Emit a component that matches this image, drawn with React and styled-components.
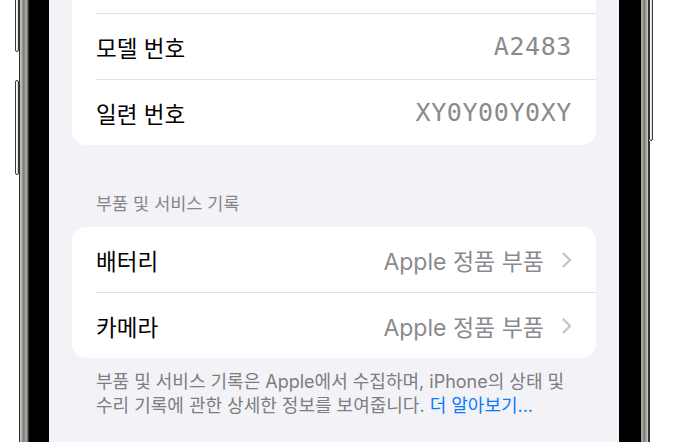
import React from 'react';
import styled, { createGlobalStyle } from 'styled-components';

const GlobalStyle = createGlobalStyle`
  html, body {
    margin: 0;
    padding: 0;
    background: #ffffff;
    overflow: hidden;
  }
`;

const Phone = styled.div`
  display: flex;
  width: 676px;
  height: 442px;
  background: #ffffff;
  font-family: 'Inter', 'Noto Sans CJK KR', sans-serif;
`;

const Edge = styled.div`
  display: flex;
  flex-direction: ${({ $side }) => ($side === 'right' ? 'row-reverse' : 'row')};
  padding-left: ${({ $side }) => ($side === 'right' ? '0' : '15px')};
  height: 100%;
`;

const ButtonColumn = styled.div`
  display: flex;
  flex-direction: column;
  width: 4px;
`;

const SideButton = styled.div`
  flex: none;
  height: ${({ $h }) => $h}px;
  margin-top: ${({ $top }) => $top}px;
  box-sizing: border-box;
  border: 1px solid #3a3a3a;
  border-radius: 2px;
  background: linear-gradient(90deg, #f4f4f4, #ffffff 50%, #b8b8b8);
`;

const EdgeLine = styled.div`
  flex: 1;
  border-left: 1px solid #3a3a3a;
`;

const Rail = styled.div`
  width: ${({ $w }) => $w}px;
  height: 100%;
  background: linear-gradient(
    ${({ $side }) => ($side === 'right' ? '270deg' : '90deg')},
    #303030 0px,
    #303030 1px,
    #c4c4be 1px,
    #b0b0aa 3px,
    #7c7c77 4px,
    #8e8e88 6px,
    #bdbdb7 7px,
    #5a5a56 9px,
    #1c1c1c 10px
  );
`;

const Bezel = styled.div`
  width: ${({ $w }) => $w}px;
  height: 100%;
  background: #000000;
`;

const Screen = styled.div`
  width: 570px;
  height: 100%;
  overflow: hidden;
  background: #f2f2f7;
  display: flex;
  flex-direction: column;
  padding: 0 23px;
  box-sizing: border-box;
`;

const Card = styled.div`
  background: #ffffff;
  border-radius: 14px;
  overflow: hidden;
  margin-top: ${({ $offset }) => $offset || 0}px;
`;

const Row = styled.div`
  padding-left: 24px;
`;

const RowInner = styled.div`
  display: flex;
  align-items: center;
  justify-content: space-between;
  height: 65px;
  padding-right: 24px;
  border-top: ${({ $first }) => ($first ? 'none' : '1px solid #e1e1e5')};
`;

const Label = styled.span`
  font-size: 22.5px;
  color: #000000;
`;

const Value = styled.span`
  display: flex;
  align-items: center;
  gap: 18px;
  font-size: ${({ $mono }) => ($mono ? '25px' : '23px')};
  font-family: ${({ $mono }) =>
    $mono
      ? "'DejaVu Sans Mono', 'Liberation Mono', monospace"
      : "'Inter', 'Noto Sans CJK KR', sans-serif"};
  letter-spacing: ${({ $mono }) => ($mono ? '0.6px' : '0')};
  color: #8a8a8e;
`;

const SectionHeader = styled.div`
  padding: 48px 24px 12px;
  font-size: 17.5px;
  line-height: 22px;
  color: #86868b;
`;

const Footer = styled.div`
  padding: 12px 24px 0;
  font-size: 18px;
  line-height: 24px;
  color: #7d7d82;
  white-space: nowrap;
`;

const Link = styled.span`
  color: #0a7aff;
`;

const Chevron = () => (
  <svg width="10" height="16" viewBox="0 0 10 16" fill="none">
    <path
      d="M1.5 1.5 L8 8 L1.5 14.5"
      stroke="#c4c4c7"
      strokeWidth="2.2"
      strokeLinecap="round"
      strokeLinejoin="round"
    />
  </svg>
);

const InfoRow = ({ label, value, mono, first, chevron }) => (
  <Row>
    <RowInner $first={first}>
      <Label>{label}</Label>
      <Value $mono={mono}>
        {value}
        {chevron && <Chevron />}
      </Value>
    </RowInner>
  </Row>
);

const App = () => {
  return (
    <>
      <GlobalStyle />
      <Phone>
        <Edge $side="left">
          <ButtonColumn>
            <SideButton $h={58} $top={-6} />
            <SideButton $h={95} $top={28} />
          </ButtonColumn>
          <Rail $w={10} $side="left" />
          <Bezel $w={20} />
        </Edge>

        <Screen>
          <Card $offset={-52}>
            {/* row scrolled above the top edge; its text is out of view */}
            <InfoRow first />
            <InfoRow label="모델 번호" value="A2483" mono />
            <InfoRow label="일련 번호" value="XY0Y00Y0XY" mono />
          </Card>

          <SectionHeader>부품 및 서비스 기록</SectionHeader>

          <Card>
            <InfoRow first label="배터리" value="Apple 정품 부품" chevron />
            <InfoRow label="카메라" value="Apple 정품 부품" chevron />
          </Card>

          <Footer>
            부품 및 서비스 기록은 Apple에서 수집하며, iPhone의 상태 및
            <br />
            수리 기록에 관한 상세한 정보를 보여줍니다. <Link>더 알아보기...</Link>
          </Footer>
        </Screen>

        <Edge $side="right">
          <ButtonColumn>
            <SideButton $h={147} $top={-6} />
            <EdgeLine />
          </ButtonColumn>
          <Rail $w={8} $side="right" />
          <Bezel $w={22} />
        </Edge>
      </Phone>
    </>
  );
};

export default App;
